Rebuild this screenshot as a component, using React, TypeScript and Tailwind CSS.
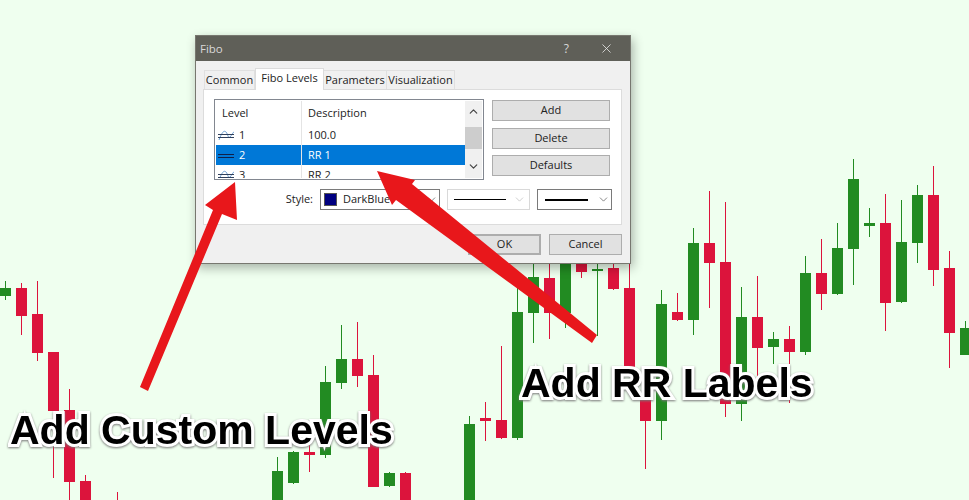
import React from 'react';
import { ChevronDown, ChevronUp, X } from 'lucide-react';

// x, wick top, body top, body bottom, wick bottom, green?
const candles: [number, number, number, number, number, number][] = [
  [5, 281, 288, 296, 300, 1],
  [21, 283, 288, 316, 335, 0],
  [37, 281, 314, 353, 361, 0],
  [53, 352, 352, 411, 478, 0],
  [69, 389, 410, 482, 500, 0],
  [85, 475, 481, 500, 500, 0],
  [117, 492, 500, 500, 500, 0],
  [277, 457, 471, 500, 500, 1],
  [293, 451, 452, 483, 484, 1],
  [309, 443, 452, 455, 472, 0],
  [325, 366, 382, 455, 458, 1],
  [341, 325, 359, 383, 389, 1],
  [357, 322, 359, 376, 387, 0],
  [373, 355, 375, 487, 487, 0],
  [389, 472, 473, 486, 487, 1],
  [405, 472, 473, 500, 500, 0],
  [469, 416, 424, 500, 500, 1],
  [485, 402, 418, 421, 441, 0],
  [501, 346, 420, 438, 439, 0],
  [517, 287, 312, 438, 440, 1],
  [533, 262, 277, 313, 343, 1],
  [549, 262, 278, 313, 339, 0],
  [565, 262, 264, 313, 328, 1],
  [581, 262, 262, 272, 278, 0],
  [597, 262, 269, 271, 336, 1],
  [613, 262, 268, 289, 290, 0],
  [629, 262, 288, 372, 372, 0],
  [645, 398, 398, 421, 469, 0],
  [661, 290, 304, 421, 440, 1],
  [677, 293, 312, 320, 321, 0],
  [693, 228, 243, 320, 335, 1],
  [709, 191, 243, 263, 308, 0],
  [725, 202, 262, 404, 417, 0],
  [741, 287, 317, 404, 421, 1],
  [757, 276, 317, 348, 385, 0],
  [773, 332, 339, 347, 364, 1],
  [789, 326, 339, 352, 403, 0],
  [805, 256, 273, 352, 355, 1],
  [821, 239, 273, 294, 310, 0],
  [837, 223, 248, 294, 295, 1],
  [853, 159, 179, 249, 285, 1],
  [869, 208, 223, 226, 237, 1],
  [885, 194, 223, 303, 331, 0],
  [901, 200, 242, 302, 303, 1],
  [917, 185, 195, 243, 263, 1],
  [933, 166, 195, 270, 286, 0],
  [949, 251, 268, 333, 368, 0],
  [965, 321, 328, 355, 355, 1],
];

const Chart = () => (
  <svg className="absolute inset-0" width="969" height="500" viewBox="0 0 969 500">
    {candles.map(([x, wt, bt, bb, wb, up]) => (
      <g key={x} fill={up ? '#228b22' : '#dc143c'}>
        <rect x={x} y={wt} width="1" height={wb - wt} />
        <rect x={x - 5} y={bt} width="11" height={bb - bt} />
      </g>
    ))}
  </svg>
);

const Arrows = () => (
  <svg className="absolute inset-0" width="969" height="500" viewBox="0 0 969 500">
    <g fill="#e8171b">
      <polygon points="140,387 148,391 222,214 237,220 235,182 205,205 213,210" />
      <polygon points="592,343 597,335 412,184 415,180 377,171 392,205 396,200" />
    </g>
  </svg>
);

const LevelIcon = ({ selected }: { selected?: boolean }) => (
  <svg width="17" height="11" viewBox="0 0 17 11" className="shrink-0">
    {!selected && <path d="M1 10 C4 2 6 0 8 2 S10 9 12 7 S15 2 16 2" fill="none" stroke="#6b9fd4" strokeWidth="1" />}
    <path d="M0 4.5H16M0 7.5H16" stroke={selected ? '#10204a' : '#30405c'} strokeWidth="1" />
  </svg>
);

const Row = ({ n, text, selected }: { n: number; text: string; selected?: boolean }) => (
  <div className={`flex h-[20px] shrink-0 items-center ${selected ? 'bg-[#0078d7] text-white' : 'text-[#222]'}`}>
    <div className={`flex w-[85px] items-center gap-[4px] pl-[2px] ${selected ? '' : ''}`}>
      <LevelIcon selected={selected} />
      <span>{n}</span>
    </div>
    <div className="flex h-full items-center border-l border-[#e4e4e4] pl-[6px]">{text}</div>
  </div>
);

const Btn = ({ label, className = '' }: { label: string; className?: string }) => (
  <div className={`flex h-[21px] items-center justify-center border border-[#adadad] bg-[#e1e1e1] text-[#222] ${className}`}>
    {label}
  </div>
);

export default function App() {
  return (
    <div className="relative h-[500px] w-[969px] overflow-hidden bg-[#efffef] font-['Open_Sans',sans-serif]">
      <Chart />

      <div className="absolute left-[195px] top-[35px] flex h-[229px] w-[436px] flex-col border border-[#77776f] bg-[#f0f0f0] text-[11px] shadow-[2px_4px_10px_rgba(0,0,0,0.3)]">
        <div className="flex h-[25px] shrink-0 items-center justify-between bg-[#5f5f58] pl-[4px] pr-[16px] text-[#d8d8d8]">
          <span className="text-[11.5px]">Fibo</span>
          <div className="flex items-center gap-[30px]">
            <span className="text-[12px]">?</span>
            <X size={15} strokeWidth={1.3} className="text-[#e8e8e8]" />
          </div>
        </div>

        <div className="flex flex-1 flex-col pl-[7px] pt-[6px]">
          <div className="flex h-[22px] items-end text-[#222]">
            <div className="ml-px flex h-[19px] w-[51px] items-center justify-center border border-b-0 border-[#e0e0e0] bg-[#f0f0f0]">Common</div>
            <div className="relative z-10 -mb-px flex h-[22px] w-[69px] items-start justify-center border border-b-0 border-[#dcdcdc] bg-white pt-[1px]">Fibo Levels</div>
            <div className="flex h-[19px] w-[63px] items-center justify-center border border-b-0 border-l-0 border-[#e0e0e0] bg-[#f0f0f0]">Parameters</div>
            <div className="flex h-[19px] w-[68px] items-center justify-center border border-b-0 border-l-0 border-[#e0e0e0] bg-[#f0f0f0]">Visualization</div>
          </div>

          <div className="flex h-[136px] w-[419px] flex-col border border-[#dcdcdc] bg-white pl-[10px] pr-[9px] pt-[9px]">
            <div className="flex gap-[8px]">
              <div className="flex h-[81px] w-[270px] border border-[#828790] p-px">
                <div className="flex min-w-0 flex-1 flex-col overflow-hidden">
                  <div className="flex h-[24px] shrink-0 items-center text-[#222]">
                    <div className="flex h-full w-[86px] items-center border-r border-[#e4e4e4] pl-[6px]">Level</div>
                    <div className="pl-[6px]">Description</div>
                  </div>
                  <Row n={1} text="100.0" />
                  <Row n={2} text="RR 1" selected />
                  <Row n={3} text="RR 2" />
                </div>
                <div className="flex w-[17px] shrink-0 flex-col items-center bg-[#f0f0f0]">
                  <ChevronUp size={13} strokeWidth={2.2} className="mt-[4px] text-[#444]" />
                  <div className="mt-[9px] h-[22px] w-full bg-[#cdcdcd]" />
                  <ChevronDown size={13} strokeWidth={2.2} className="mt-[11px] text-[#444]" />
                </div>
              </div>
              <div className="flex w-[118px] flex-col gap-[7px] pt-px">
                <Btn label="Add" />
                <Btn label="Delete" />
                <div className="-mt-px">
                  <Btn label="Defaults" />
                </div>
              </div>
            </div>

            <div className="mt-[9px] flex h-[21px] items-center justify-end">
              <span className="mr-[7px] text-[#222]">Style:</span>
              <div className="mr-[7px] flex h-[21px] w-[120px] items-center border border-[#7a7a7a] pl-[3px] pr-[1px] text-[#222]">
                <div className="mr-[6px] h-[13px] w-[13px] border border-[#555] bg-[#000080]" />
                <span>DarkBlue</span>
                <ChevronDown size={13} strokeWidth={1.3} className="ml-auto text-[#555]" />
              </div>
              <div className="mr-[7px] flex h-[21px] w-[83px] items-center border border-[#d9d9d9] pl-[6px] pr-[3px]">
                <div className="h-px w-[52px] bg-black" />
                <ChevronDown size={13} strokeWidth={1.3} className="ml-auto text-[#bcbcbc]" />
              </div>
              <div className="flex h-[21px] w-[75px] items-center border border-[#7a7a7a] pl-[7px] pr-[1px]">
                <div className="h-[2px] w-[43px] bg-black" />
                <ChevronDown size={13} strokeWidth={1.3} className="ml-auto text-[#555]" />
              </div>
            </div>
          </div>

          <div className="mt-[9px] flex justify-end gap-[8px] pr-[8px]">
            <Btn label="OK" className="w-[73px] border-2 border-[#0078d7]" />
            <Btn label="Cancel" className="w-[73px]" />
          </div>
        </div>
      </div>

      <Arrows />

      <div className="absolute left-[10px] top-[405px] whitespace-nowrap font-['Liberation_Sans',sans-serif] text-[41px] font-bold leading-[50px] text-black drop-shadow-[0_1px_1px_#777] [-webkit-text-stroke:6px_white] [paint-order:stroke_fill]">
        Add Custom Levels
      </div>
      <div className="absolute left-[521px] top-[358px] whitespace-nowrap font-['Liberation_Sans',sans-serif] text-[41px] font-bold leading-[50px] text-black drop-shadow-[0_1px_1px_#777] [-webkit-text-stroke:6px_white] [paint-order:stroke_fill]">
        Add RR Labels
      </div>
    </div>
  );
}
